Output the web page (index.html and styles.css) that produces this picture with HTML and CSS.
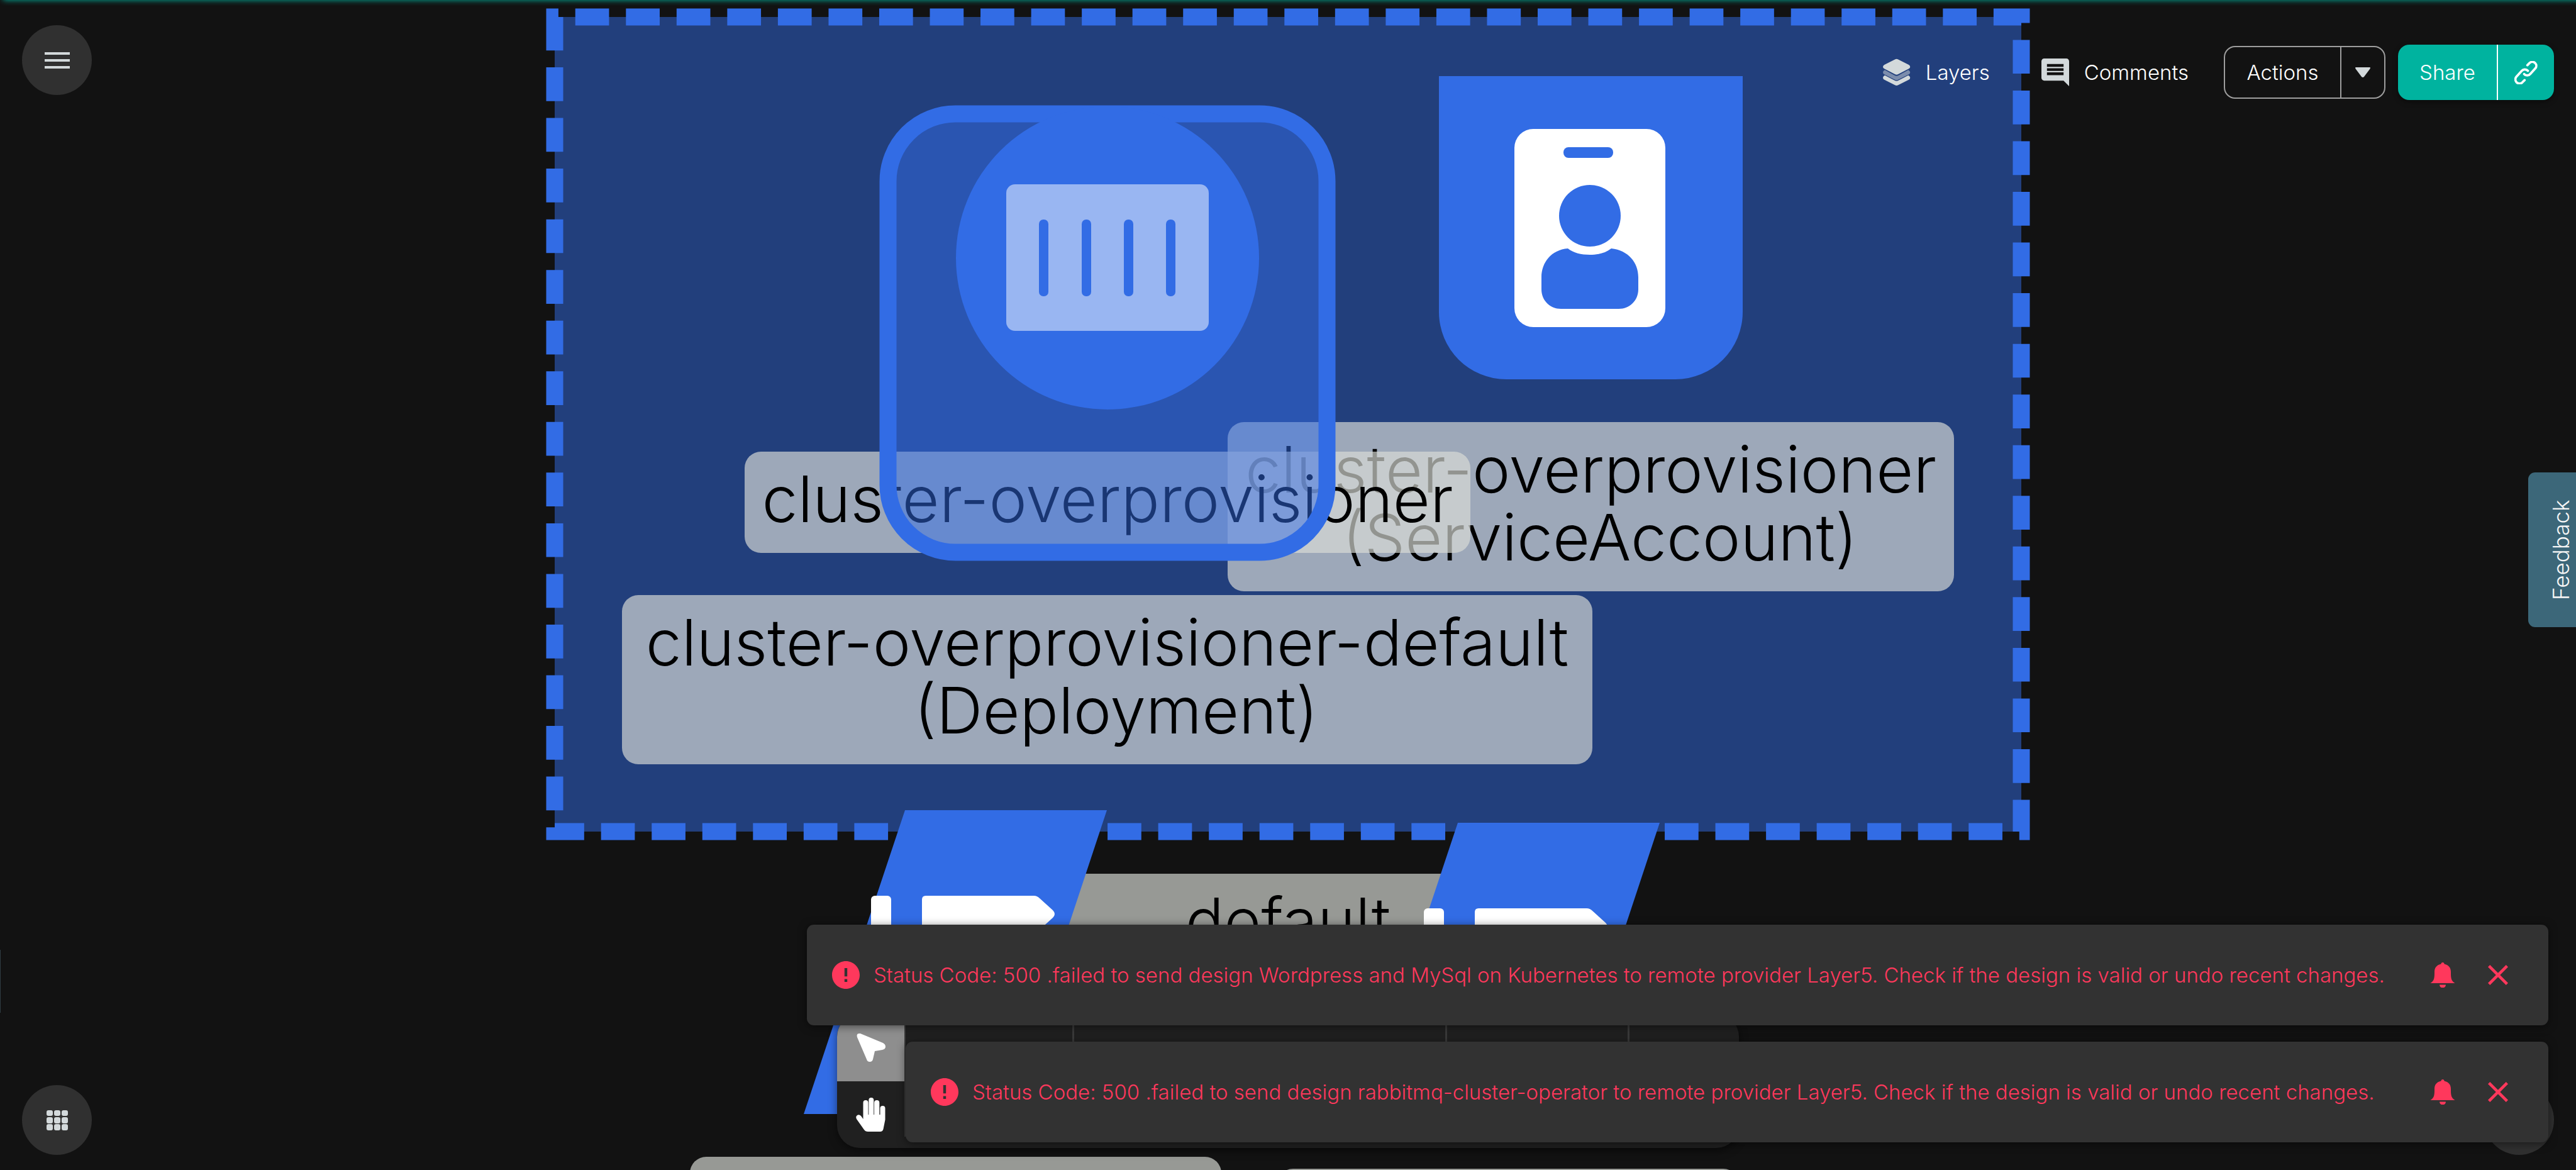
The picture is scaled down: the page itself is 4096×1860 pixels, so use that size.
FILE: index.html
```html
<!DOCTYPE html>
<html lang="en">
<head>
<meta charset="utf-8">
<title>Design canvas</title>
<link rel="stylesheet" href="styles.css">
</head>
<body>
<div class="app">
  <main class="canvas" aria-label="Design canvas">
    <svg class="layer" aria-hidden="true">
      <rect class="fill-half" x="882" y="27" width="2332" height="1295"/>
      <path class="dashed" d="M882 27H3214V1322H882Z"/>
    </svg>
    <div class="label label-namespace">default</div>
    <div class="label label-bottom-left"></div>
    <div class="label label-bottom-right"></div>
    <div class="label label-account">cluster-overprovisioner<br> (ServiceAccount)</div>
    <div class="label label-deployment">cluster-overprovisioner-default<br> (Deployment)</div>
    <div class="label label-group">cluster-overprovisioner</div>
    <svg class="layer" aria-hidden="true">
      <!-- deployment group with its container -->
      <rect class="fill-half" x="1412" y="181" width="698" height="697" rx="107"/>
      <rect class="outline" x="1412" y="181" width="698" height="697" rx="107"/>
      <circle class="blue" cx="1761" cy="410" r="241"/>
      <rect class="white-half" x="1600" y="293" width="322" height="233" rx="14"/>
      <g class="blue">
        <rect x="1652" y="349" width="15" height="122" rx="7"/>
        <rect x="1720" y="349" width="15" height="122" rx="7"/>
        <rect x="1787" y="349" width="15" height="122" rx="7"/>
        <rect x="1854" y="349" width="15" height="122" rx="7"/>
      </g>
      <!-- service account -->
      <path class="blue" d="M2288 121H2771V496A107 107 0 0 1 2664 603H2395A107 107 0 0 1 2288 496Z"/>
      <rect class="white" x="2408" y="205" width="240" height="315" rx="30"/>
      <g class="blue">
        <rect x="2486" y="234" width="79" height="17" rx="8"/>
        <circle cx="2528" cy="343" r="49"/>
        <path d="M2493 395C2502 402 2514 405 2528 405S2553 402 2562 395C2589 398 2605 417 2605 441V460C2605 478 2591 491 2574 491H2482C2465 491 2451 478 2451 460V441C2451 417 2467 397 2493 395Z"/>
      </g>
      <!-- label tags -->
      <g id="tag">
        <path class="blue" d="M1439 1288H1760L1600 1771H1278Z"/>
        <rect class="white" x="1385" y="1424" width="32" height="70" rx="6"/>
        <path class="white" d="M1472 1424H1644Q1649 1424 1653 1428L1674 1447Q1680 1453 1674 1459L1653 1478Q1649 1482 1644 1482H1472Q1466 1482 1466 1476V1430Q1466 1424 1472 1424Z"/>
      </g>
      <use href="#tag" x="879" y="20"/>
    </svg>
  </main>

  <div class="progress"></div>
  <div class="drawer-edge"></div>

  <header class="topbar">
    <button class="fab" type="button" aria-label="Menu">
      <svg width="54" height="54" viewBox="0 0 54 54"><path d="M7 14h40v4H7zM7 25h40v4H7zM7 36h40v4H7z"/></svg>
    </button>
    <nav class="actions">
      <button class="text-button" type="button">
        <svg width="44" height="44" viewBox="0 0 60 60"><path d="M26 2Q29.500 0 33 2L56 13.500Q59 15.500 59 18T56 22L33 34Q29.500 36 26 34L3 22Q0 20.500 0 18T3 13.500Z"/><path opacity=".5" d="M4 25L25 36.500Q29.500 39 34 36.500L55 25Q59 27 59 30T56 34.500L33 46Q29.500 48 26 46L3 34.500Q0 33 0 30T4 25Z"/><path d="M4 36.500L25 47.500Q29.500 50 34 47.500L55 36.500Q59 38.500 59 41.500T56 46L33 57.500Q29.500 59.500 26 57.500L3 46Q0 44.500 0 41.500T4 36.500Z"/></svg>
        <span>Layers</span>
      </button>
      <button class="text-button" type="button">
        <svg width="44" height="44" viewBox="0 0 20 20"><path fill-rule="evenodd" d="M20 2c0-1.100-.9-2-2-2H2C.9 0 0 .9 0 2v12c0 1.100.9 2 2 2h14l4 4zM16 12H4v-2h12zm0-3H4V7h12zm0-3H4V4h12z"/></svg>
        <span>Comments</span>
      </button>
      <div class="split outlined">
        <button class="split-main" type="button">Actions</button>
        <button class="split-side" type="button" aria-label="More actions">
          <svg width="24" height="16" viewBox="0 0 24 16"><path d="M1 0h22q2 0 0 3L14 15q-2 2-4 0L1 3q-2-3 0-3z"/></svg>
        </button>
      </div>
      <div class="split filled">
        <button class="split-main" type="button">Share</button>
        <button class="split-side" type="button" aria-label="Copy link">
          <svg width="37" height="37" viewBox="0 0 50 50"><path class="link-stroke" d="M28 9l5-5a8.500 8.500 0 0 1 12 12L34 28a8.500 8.500 0 0 1-13 0M29 21a8.500 8.500 0 0 0-13 0L5 33a8.500 8.500 0 0 0 12 13l5-5"/></svg>
        </button>
      </div>
    </nav>
  </header>

  <button class="feedback" type="button">Feedback</button>

  <footer class="bottombar">
    <button class="fab" type="button" aria-label="Apps">
      <svg width="34" height="32" viewBox="0 0 34 32"><g><rect width="10" height="9" rx="3"/><rect x="12" width="10" height="9" rx="3"/><rect x="24" width="10" height="9" rx="3"/><rect y="11" width="10" height="10" rx="3"/><rect x="12" y="11" width="10" height="10" rx="3"/><rect x="24" y="11" width="10" height="10" rx="3"/><rect y="22" width="10" height="10" rx="3"/><rect x="12" y="22" width="10" height="10" rx="3"/><rect x="24" y="22" width="10" height="10" rx="3"/></g></svg>
    </button>
    <div class="toolbar" role="toolbar" aria-label="Tools">
      <div class="modes">
        <button class="mode selected" type="button" aria-label="Select">
          <svg width="46" height="46" viewBox="0 0 46 46"><path d="M1 7Q-1 0 6 1L42 16Q46 18 46 22T41 27L29 29 26 42Q25 46 21 46T16 42Z"/></svg>
        </button>
        <button class="mode" type="button" aria-label="Pan">
          <svg width="48" height="54" viewBox="0 0 48 54"><path d="M11.500 34V8a4 4 0 0 1 8 0V27h.8V4a4 4 0 0 1 8 0V27h.8V8a4 4 0 0 1 8.200 0V27h1.200V17a4 4 0 0 1 8 0V35l-3 15q-1 4-5 4H19q-4 0-6-3L1 34q-2-4 1-6t6 1z"/></svg>
        </button>
      </div>
      <div class="group group-a"></div>
      <div class="group group-b"></div>
      <div class="group group-c"></div>
    </div>
    <button class="fab" type="button" aria-label="Help"></button>
  </footer>

  <section class="toasts" aria-label="Notifications">
    <div class="toast toast-wide" role="alert">
      <svg width="44" height="44" viewBox="2 2 20 20"><path d="M12 2C6.480 2 2 6.480 2 12s4.480 10 10 10 10-4.480 10-10S17.520 2 12 2zm1 15h-2v-2h2v2zm0-4h-2V7h2v6z"/></svg>
      <p>Status Code: 500 .failed to send design Wordpress and MySql on Kubernetes to remote provider Layer5. Check if the design is valid or undo recent changes.</p>
      <button type="button" aria-label="Notifications">
        <svg width="40" height="40" viewBox="0 0 40 40"><path d="M17.500 2.500a2.500 2.500 0 0 1 5 0C29 4 33 8 33 15 33 24 33 29 39.500 33H.5C7 29 7 24 7 15 7 8 11 4 17.500 2.500zM15 35.500h10a5 5 0 0 1-10 0z"/></svg>
      </button>
      <button type="button" aria-label="Close">
        <svg width="32" height="32" viewBox="5 5 14 14"><path d="M19 6.410L17.590 5 12 10.590 6.410 5 5 6.410 10.590 12 5 17.590 6.410 19 12 13.410 17.590 19 19 17.590 13.410 12z"/></svg>
      </button>
    </div>
    <div class="toast" role="alert">
      <svg width="44" height="44" viewBox="2 2 20 20"><path d="M12 2C6.480 2 2 6.480 2 12s4.480 10 10 10 10-4.480 10-10S17.520 2 12 2zm1 15h-2v-2h2v2zm0-4h-2V7h2v6z"/></svg>
      <p>Status Code: 500 .failed to send design rabbitmq-cluster-operator to remote provider Layer5. Check if the design is valid or undo recent changes.</p>
      <button type="button" aria-label="Notifications">
        <svg width="40" height="40" viewBox="0 0 40 40"><path d="M17.500 2.500a2.500 2.500 0 0 1 5 0C29 4 33 8 33 15 33 24 33 29 39.500 33H.5C7 29 7 24 7 15 7 8 11 4 17.500 2.500zM15 35.500h10a5 5 0 0 1-10 0z"/></svg>
      </button>
      <button type="button" aria-label="Close">
        <svg width="32" height="32" viewBox="5 5 14 14"><path d="M19 6.410L17.590 5 12 10.590 6.410 5 5 6.410 10.590 12 5 17.590 6.410 19 12 13.410 17.590 19 19 17.590 13.410 12z"/></svg>
      </button>
    </div>
  </section>
</div>
</body>
</html>
```
FILE: styles.css
```css
* { box-sizing: border-box; }

body {
  margin: 0;
  background: #121212;
  color: #fff;
  font-family: Inter, "Liberation Sans", sans-serif;
  font-size: 33px;
  font-weight: 300;
}

button {
  margin: 0;
  padding: 0;
  border: 0;
  background: none;
  color: inherit;
  font: inherit;
}

svg { display: block; fill: #d3d9db; }

.app {
  position: relative;
  display: flex;
  flex-direction: column;
  justify-content: space-between;
  min-height: 100vh;
  overflow: hidden;
}

/* Canvas */
.canvas { position: absolute; inset: 0; overflow: hidden; }
.layer { position: absolute; inset: 0; width: 100%; height: 100%; }
.blue { fill: #326ce5; }
.white { fill: #fff; }
.white-half { fill: #fff; fill-opacity: .5; }
.fill-half { fill: #326ce5; fill-opacity: .5; }
.outline { fill: none; stroke: #326ce5; stroke-width: 27; }
.dashed {
  fill: none;
  stroke: #326ce5;
  stroke-width: 27;
  stroke-dasharray: 53.700 26.840;
  stroke-dashoffset: 47.800;
}

.label {
  position: absolute;
  padding: 21px 0 32px;
  border-radius: 26px;
  background: rgba(218, 221, 215, .67);
  color: #000;
  font-size: 102px;
  line-height: 108px;
  text-align: center;
  white-space: pre;
}
.label-account { left: 1952px; top: 671px; width: 1155px; }
.label-group { left: 1184px; top: 718px; width: 1154px; }
.label-deployment { left: 989px; top: 946px; width: 1543px; }
.label-namespace { left: 1698px; top: 1389px; width: 700px; }
.label-bottom-left { left: 1097px; top: 1839px; width: 845px; }
.label-bottom-right { left: 2030px; top: 1858px; width: 736px; }

.progress {
  position: absolute;
  left: 5px;
  right: -20px;
  top: -10px;
  height: 10px;
  box-shadow: 0 0 10px #00b39f;
}
.drawer-edge { position: absolute; left: 0; top: 1510px; width: 1px; height: 100px; background: #2f3d43; }

/* Top bar */
.topbar {
  position: relative;
  display: flex;
  justify-content: space-between;
  align-items: flex-start;
  padding: 40px 35px 0;
}
.fab {
  display: flex;
  align-items: center;
  justify-content: center;
  width: 111px;
  height: 111px;
  border-radius: 50%;
  background: #303030;
}
.actions { display: flex; align-items: center; padding-top: 31px; }
.text-button { display: flex; align-items: center; gap: 24px; margin-right: 82px; }
.text-button + .text-button { margin-right: 56px; }
.split { display: flex; align-items: stretch; border-radius: 18px; }
.split-side { display: flex; align-items: center; justify-content: center; }
.outlined { width: 257px; height: 84px; border: 2px solid #9e9e9e; margin-right: 20px; }
.outlined .split-main { flex: 1; border-right: 2px solid #9e9e9e; }
.outlined .split-side { width: 68px; }
.filled { width: 248px; height: 88px; background: #00b39f; box-shadow: 0 3px 8px rgba(0, 0, 0, .4); }
.filled .split-main { flex: 1; border-right: 2px solid #fff; }
.filled .split-side { width: 89px; }
.link-stroke { fill: none; stroke: #fff; stroke-width: 5; stroke-linecap: round; }

.feedback {
  position: absolute;
  right: 0;
  top: 751px;
  width: 76px;
  height: 246px;
  border-radius: 0 11px 11px 0;
  background: #3c6779;
  color: #f5f5f5;
  writing-mode: vertical-rl;
  transform: rotate(180deg);
  font-size: 35px;
  line-height: 48px;
  padding-right: 28px;
}

/* Bottom bar */
.bottombar {
  position: relative;
  display: flex;
  justify-content: space-between;
  align-items: flex-end;
  padding: 0 35px 24px;
}
.toolbar {
  display: flex;
  width: 1434px;
  height: 213px;
  margin-bottom: 11px;
  border-radius: 36px;
  background: #202020;
  box-shadow: 0 4px 14px rgba(0, 0, 0, .5);
  overflow: hidden;
}
.modes { display: flex; flex-direction: column; width: 107px; }
.mode { flex: 1; display: flex; align-items: center; justify-content: center; }
.mode svg { fill: #fff; }
.selected { background: #8e8e8e; }
.group { margin: 18px 0; border-right: 3px solid #3a3a3a; }
.group-a { width: 270px; border-left: 2px solid #3a3a3a; }
.group-b { width: 593px; }
.group-c { width: 290px; }

/* Notifications */
.toasts {
  position: absolute;
  right: 44px;
  bottom: 44px;
  display: flex;
  flex-direction: column;
  align-items: flex-end;
  gap: 26px;
}
.toast {
  display: flex;
  align-items: center;
  min-width: 2612px;
  height: 160px;
  padding: 0 58px 0 40px;
  border-radius: 11px;
  background: #323232;
  color: #ff385c;
  font-weight: 350;
  box-shadow: 0 2px 14px rgba(0, 0, 0, .5);
}
.toast-wide { min-width: 2769px; }
.toast svg { fill: #ff385c; }
.toast p { flex: 1; margin: 0 40px 0 22px; white-space: nowrap; }
.toast button { display: flex; align-items: center; justify-content: center; width: 44px; height: 44px; }
.toast button + button { margin-left: 44px; }
```
